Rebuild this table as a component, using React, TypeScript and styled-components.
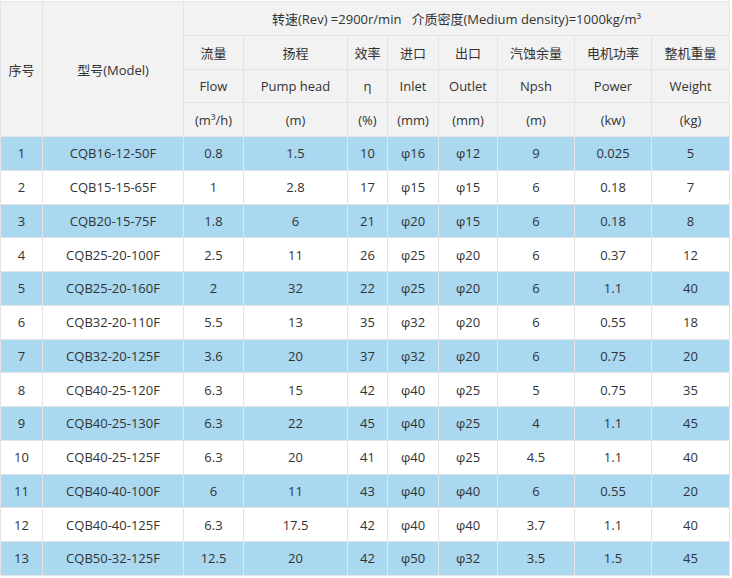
import React from 'react'
import styled, { createGlobalStyle } from 'styled-components'

const GlobalStyle = createGlobalStyle`
  html, body {
    margin: 0;
    padding: 0;
    background: #fff;
  }
  body {
    font-family: "Open Sans", "Noto Sans CJK SC", sans-serif;
    color: #333;
  }
`

const widths = [42, 141, 60, 104, 40, 51, 59, 77, 77, 78]

const units = [
  { cn: '流量', en: 'Flow', unit: '(m³/h)' },
  { cn: '扬程', en: 'Pump head', unit: '(m)' },
  { cn: '效率', en: 'η', unit: '(%)' },
  { cn: '进口', en: 'Inlet', unit: '(mm)' },
  { cn: '出口', en: 'Outlet', unit: '(mm)' },
  { cn: '汽蚀余量', en: 'Npsh', unit: '(m)' },
  { cn: '电机功率', en: 'Power', unit: '(kw)' },
  { cn: '整机重量', en: 'Weight', unit: '(kg)' },
]

const rows = [
  ['CQB16-12-50F', '0.8', '1.5', '10', 'φ16', 'φ12', '9', '0.025', '5'],
  ['CQB15-15-65F', '1', '2.8', '17', 'φ15', 'φ15', '6', '0.18', '7'],
  ['CQB20-15-75F', '1.8', '6', '21', 'φ20', 'φ15', '6', '0.18', '8'],
  ['CQB25-20-100F', '2.5', '11', '26', 'φ25', 'φ20', '6', '0.37', '12'],
  ['CQB25-20-160F', '2', '32', '22', 'φ25', 'φ20', '6', '1.1', '40'],
  ['CQB32-20-110F', '5.5', '13', '35', 'φ32', 'φ20', '6', '0.55', '18'],
  ['CQB32-20-125F', '3.6', '20', '37', 'φ32', 'φ20', '6', '0.75', '20'],
  ['CQB40-25-120F', '6.3', '15', '42', 'φ40', 'φ25', '5', '0.75', '35'],
  ['CQB40-25-130F', '6.3', '22', '45', 'φ40', 'φ25', '4', '1.1', '45'],
  ['CQB40-25-125F', '6.3', '20', '41', 'φ40', 'φ25', '4.5', '1.1', '40'],
  ['CQB40-40-100F', '6', '11', '43', 'φ40', 'φ40', '6', '0.55', '20'],
  ['CQB40-40-125F', '6.3', '17.5', '42', 'φ40', 'φ40', '3.7', '1.1', '40'],
  ['CQB50-32-125F', '12.5', '20', '42', 'φ50', 'φ32', '3.5', '1.5', '45'],
]

export default function App() {
  return (
    <>
      <GlobalStyle />
      <Table>
        <colgroup>
          {widths.map((w, i) => (
            <col key={i} style={{ width: w }} />
          ))}
        </colgroup>
        <thead>
          <Row>
            <HeadCell rowSpan={4}>序号</HeadCell>
            <HeadCell rowSpan={4}>型号(Model)</HeadCell>
            <HeadCell colSpan={8}>转速(Rev) =2900r/min&nbsp;&nbsp;&nbsp;介质密度(Medium density)=1000kg/m³</HeadCell>
          </Row>
          <Row>
            {units.map((u) => (
              <HeadCell key={u.cn}>{u.cn}</HeadCell>
            ))}
          </Row>
          <Row>
            {units.map((u) => (
              <HeadCell key={u.cn}>{u.en}</HeadCell>
            ))}
          </Row>
          <Row>
            {units.map((u) => (
              <HeadCell key={u.cn}>{u.unit}</HeadCell>
            ))}
          </Row>
        </thead>
        <tbody>
          {rows.map((r, i) => (
            <Row key={r[0]} $striped={i % 2 === 0}>
              <Cell>{i + 1}</Cell>
              {r.map((v, j) => (
                <Cell key={j}>{v}</Cell>
              ))}
            </Row>
          ))}
        </tbody>
      </Table>
    </>
  )
}

const Table = styled.table`
  border-collapse: collapse;
  table-layout: fixed;
  width: 729px;
  margin-top: 1px;
  font-size: 13px;
`

const Row = styled.tr<{ $striped?: boolean }>`
  height: 33.75px;
  background: ${(p) => (p.$striped ? '#a9d8f0' : '#fff')};
`

const Cell = styled.td`
  border: 1px solid #e3e3e3;
  padding: 0;
  text-align: center;
  vertical-align: middle;
  color: #333;
  white-space: nowrap;
`

const HeadCell = styled.th`
  border: 1px solid #e3e3e3;
  padding: 0;
  text-align: center;
  vertical-align: middle;
  font-weight: 400;
  color: #333;
  background: #f2f2f2;
  white-space: nowrap;
`
